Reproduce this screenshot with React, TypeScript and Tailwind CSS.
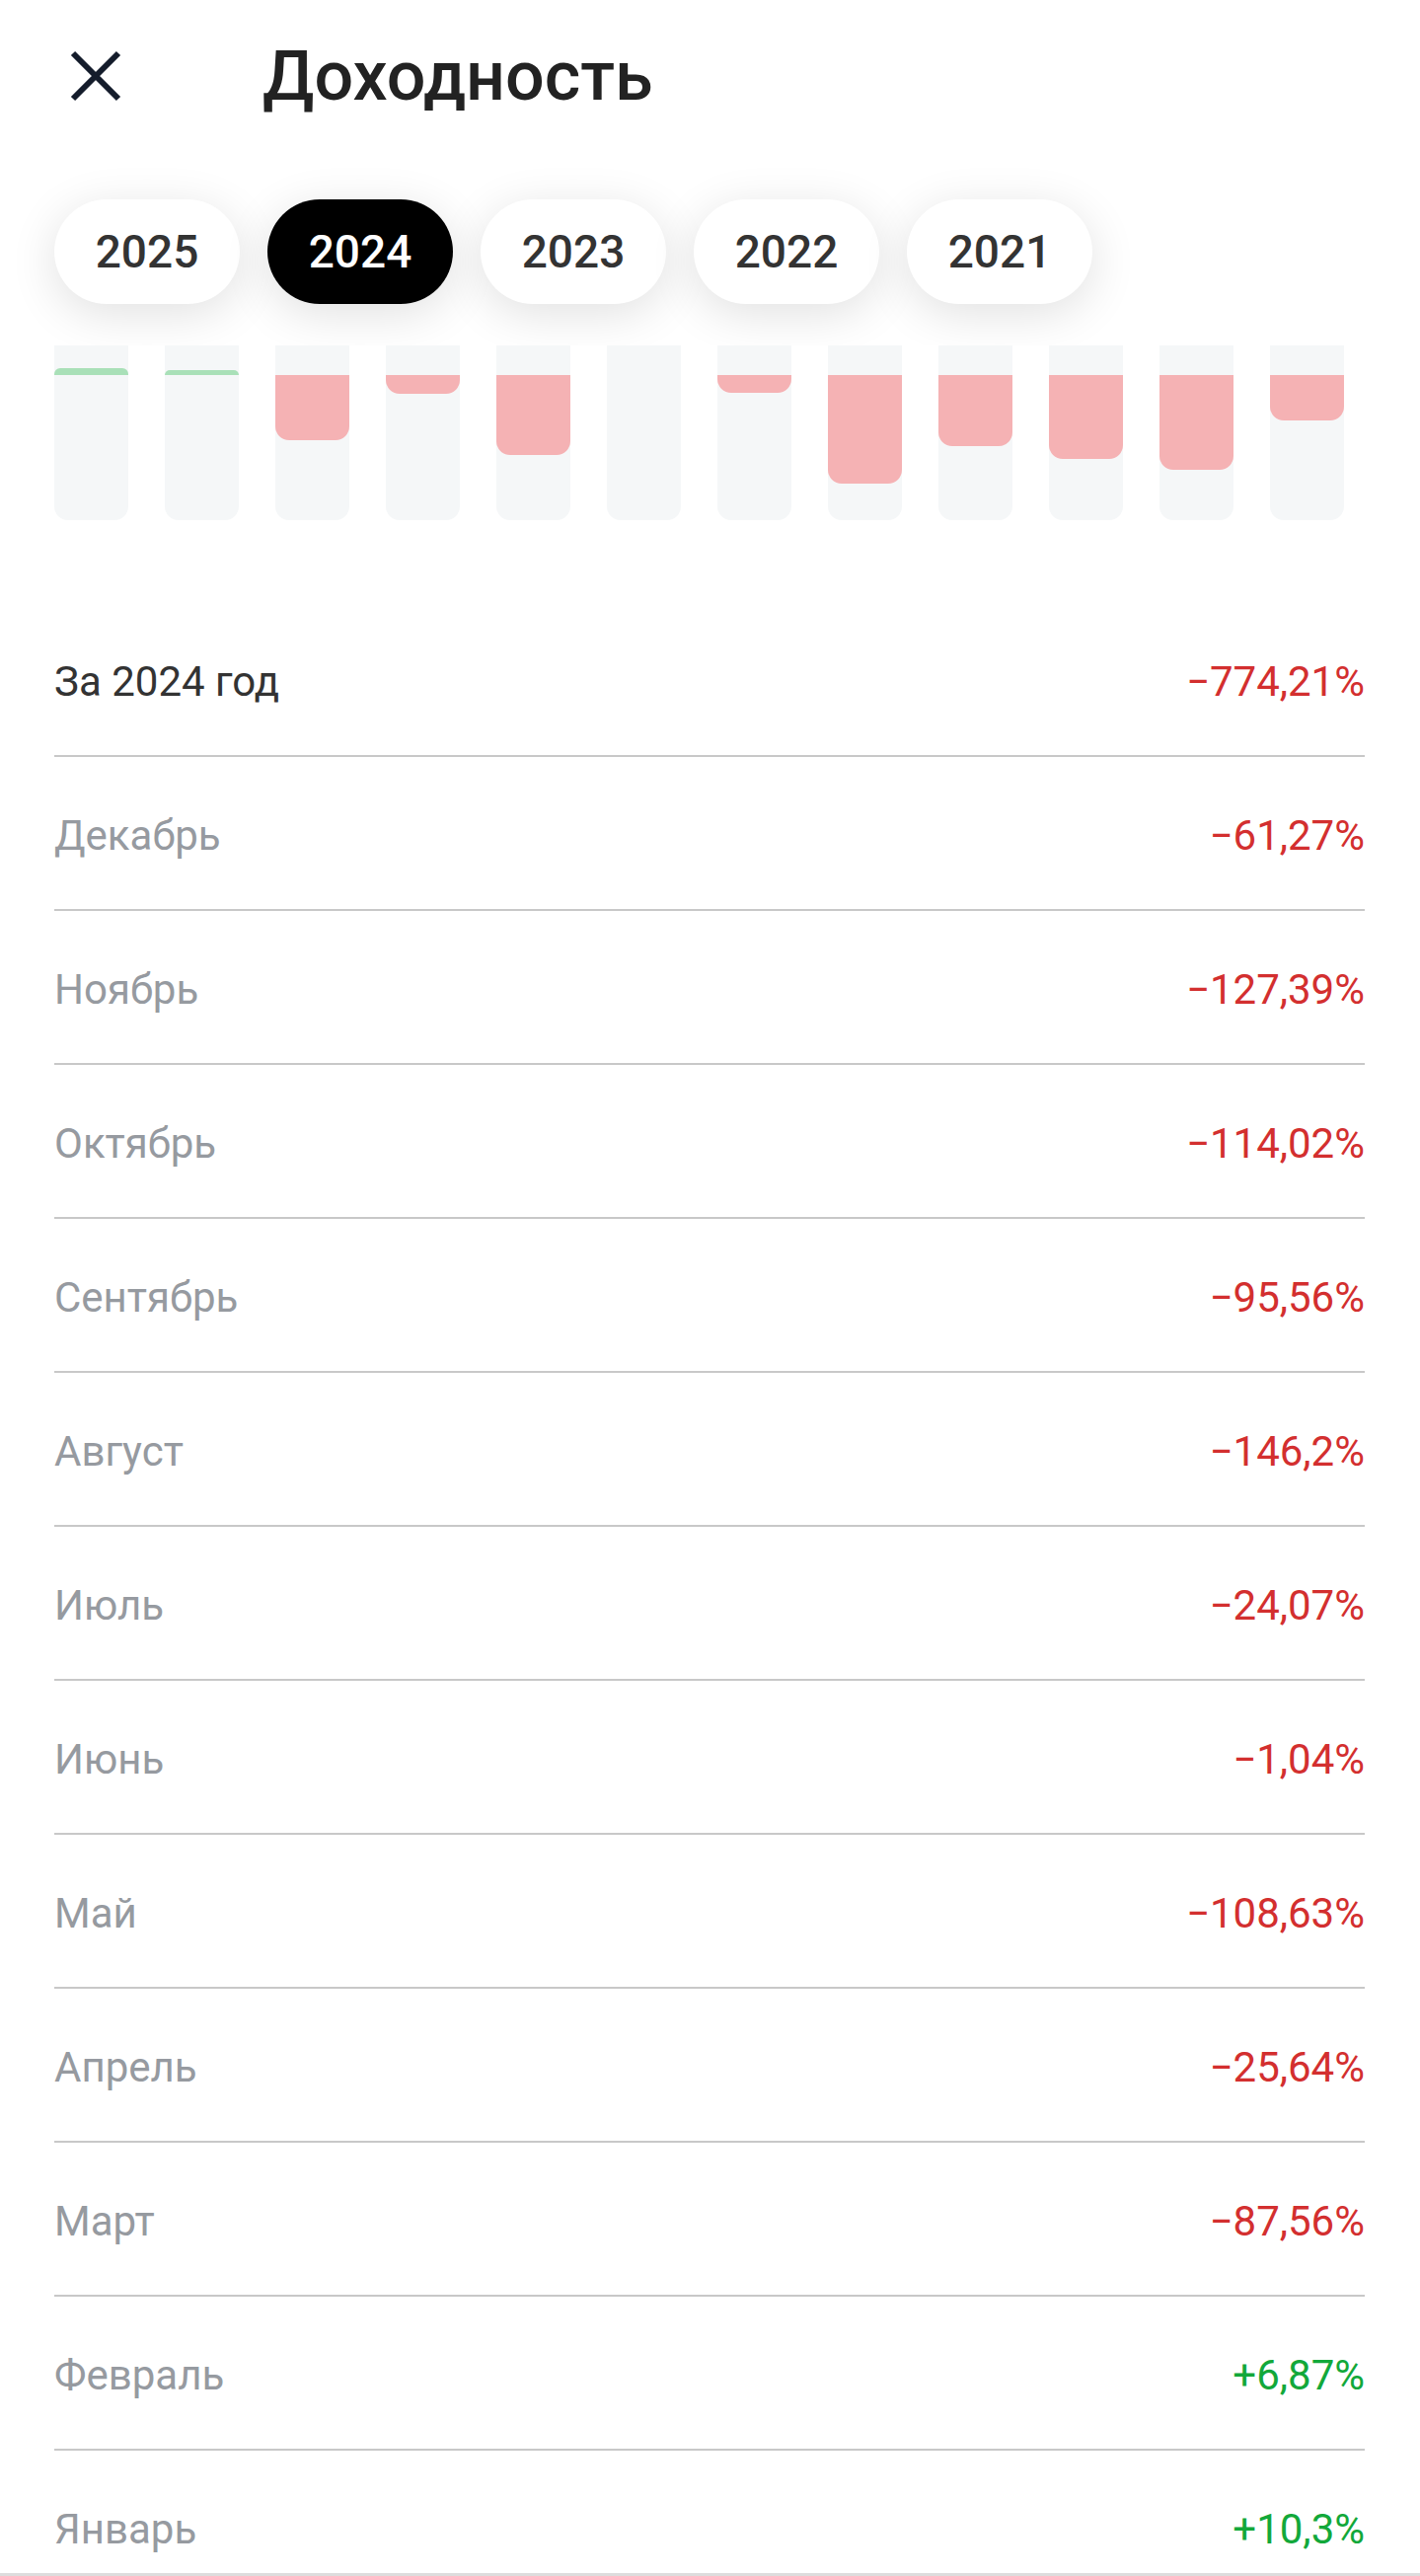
import { useState } from 'react';

interface MonthYield { name: string; label: string; value: number }

const YEARS = [2025, 2024, 2023, 2022, 2021] as const;

const TOTAL = '−774,21%';

// January first, the way the chart reads; the table goes the other way round
const MONTHS: MonthYield[] = [
  { name: 'Январь',   label: '+10,3%',   value: 10.3 },
  { name: 'Февраль',  label: '+6,87%',   value: 6.87 },
  { name: 'Март',     label: '−87,56%',  value: -87.56 },
  { name: 'Апрель',   label: '−25,64%',  value: -25.64 },
  { name: 'Май',      label: '−108,63%', value: -108.63 },
  { name: 'Июнь',     label: '−1,04%',   value: -1.04 },
  { name: 'Июль',     label: '−24,07%',  value: -24.07 },
  { name: 'Август',   label: '−146,2%',  value: -146.2 },
  { name: 'Сентябрь', label: '−95,56%',  value: -95.56 },
  { name: 'Октябрь',  label: '−114,02%', value: -114.02 },
  { name: 'Ноябрь',   label: '−127,39%', value: -127.39 },
  { name: 'Декабрь',  label: '−61,27%',  value: -61.27 },
];

const PX_PER_PERCENT = 0.754;

function barHeight(value: number): number {
  return Math.floor(Math.abs(value) * PX_PER_PERCENT);
}

export default function App() {
  const [year, setYear] = useState<number>(2024);

  return (
    <div className="bg-white font-['Roboto',sans-serif] text-[#333333]">
      <header className="flex items-center px-[55px] pt-[33px]">
        <button type="button" aria-label="Закрыть" className="p-4 text-[#141c2b]">
          <CloseIcon />
        </button>
        <h1 className="ml-[127px] text-[70px] leading-[88px] font-medium text-[#222222]">Доходность</h1>
      </header>

      <nav className="flex gap-7 overflow-hidden px-[55px] pt-[81px] pb-[42px]">
        {YEARS.map((y) => (
          <button
            key={y}
            type="button"
            aria-pressed={y === year}
            onClick={() => setYear(y)}
            className={`h-[106px] w-[188px] shrink-0 rounded-full text-[46px] font-medium shadow-[0_10px_48px_rgba(0,0,0,0.12)] ${
              y === year ? 'bg-black text-white' : 'bg-white text-[#333333]'
            }`}
          >{y}</button>
        ))}
      </nav>

      <YieldChart months={MONTHS} />

      <table className="mx-[55px] mt-[84px] w-[calc(100%-111px)] border-collapse text-[42px] leading-[50px]">
        <tbody>
          <Row name={`За ${year} год`} label={TOTAL} total />
          {[...MONTHS].reverse().map((m) => (
            <Row key={m.name} name={m.name} label={m.label} />
          ))}
        </tbody>
      </table>
      <div className="h-[3px] bg-[#dddddd]" />
    </div>
  );
}

function YieldChart({ months }: { months: MonthYield[] }) {
  return (
    <div className="mr-[77px] ml-[55px] grid grid-cols-12 gap-[37px]">
      {months.map((m) => (
        <div key={m.name} className="h-[177px] rounded-b-[14px] bg-[#f5f7f8]">
          <div className="flex h-[30px] items-end">
            {m.value > 0 ? (
              <div className="w-full rounded-t-[6px] bg-[#a9e0b8]" style={{ height: barHeight(m.value) }} />
            ) : null}
          </div>
          {m.value < 0 ? (
            <div className="rounded-b-[14px] bg-[#f5b2b4]" style={{ height: barHeight(m.value) }} />
          ) : null}
        </div>
      ))}
    </div>
  );
}

function Row({ name, label, total }: { name: string; label: string; total?: boolean }) {
  const tone = label.startsWith('+') ? 'text-[#12a83a]' : 'text-[#d32f2f]';
  return (
    <tr className="group border-b-2 border-[#c8c8c8] last:border-b-0">
      <th
        scope="row"
        className={`pt-[55px] pb-[49px] text-left font-normal group-last:pb-[19px] ${total ? 'text-[#333333]' : 'text-[#969aa0]'}`}
      >{name}</th>
      <td className={`pt-[55px] pb-[49px] text-right group-last:pb-[19px] ${tone}`}>{label}</td>
    </tr>
  );
}

function CloseIcon() {
  return (
    <svg width="52" height="52" viewBox="0 0 52 52" fill="none" stroke="currentColor" strokeWidth="6">
      <path d="M3 3L49 49M49 3L3 49" />
    </svg>
  );
}
